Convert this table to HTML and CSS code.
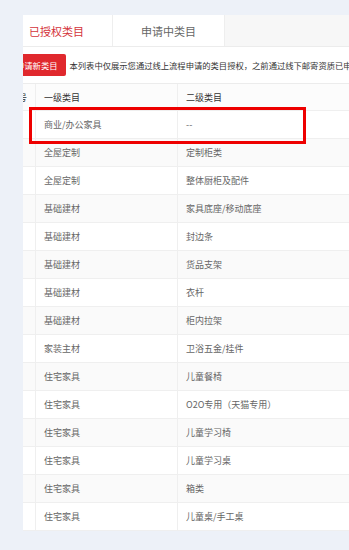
FILE: index.html
```html
<!DOCTYPE html>
<html lang="zh">
<head>
<meta charset="utf-8">
<link rel="stylesheet" href="styles.css">
</head>
<body>
<div class="panel">
  <div class="scroller">
    <div class="tabs">
      <div class="tab active">已授权类目</div>
      <div class="tab">申请中类目</div>
      <div class="tab-fill"></div>
    </div>
    <div class="toolbar">
      <button class="btn">申请新类目</button>
      <span class="desc">本列表中仅展示您通过线上流程申请的类目授权，之前通过线下邮寄资质已申请的类目请联系您的对接人员查询</span>
    </div>
    <table class="grid">
      <thead>
        <tr><th class="c0">序号</th><th class="c1">一级类目</th><th class="c2">二级类目</th></tr>
      </thead>
      <tbody>
        <tr><td class="c0"></td><td>商业/办公家具</td><td>--</td></tr>
        <tr><td class="c0"></td><td>全屋定制</td><td>定制柜类</td></tr>
        <tr><td class="c0"></td><td>全屋定制</td><td>整体厨柜及配件</td></tr>
        <tr><td class="c0"></td><td>基础建材</td><td>家具底座/移动底座</td></tr>
        <tr><td class="c0"></td><td>基础建材</td><td>封边条</td></tr>
        <tr><td class="c0"></td><td>基础建材</td><td>货品支架</td></tr>
        <tr><td class="c0"></td><td>基础建材</td><td>衣杆</td></tr>
        <tr><td class="c0"></td><td>基础建材</td><td>柜内拉架</td></tr>
        <tr><td class="c0"></td><td>家装主材</td><td>卫浴五金/挂件</td></tr>
        <tr><td class="c0"></td><td>住宅家具</td><td>儿童餐椅</td></tr>
        <tr><td class="c0"></td><td>住宅家具</td><td>O2O专用（天猫专用）</td></tr>
        <tr><td class="c0"></td><td>住宅家具</td><td>儿童学习椅</td></tr>
        <tr><td class="c0"></td><td>住宅家具</td><td>儿童学习桌</td></tr>
        <tr><td class="c0"></td><td>住宅家具</td><td>箱类</td></tr>
        <tr><td class="c0"></td><td>住宅家具</td><td>儿童桌/手工桌</td></tr>
      </tbody>
    </table>
  </div>
</div>
<div class="highlight"></div>
</body>
</html>
```

FILE: styles.css
```css
html, body {
  margin: 0;
  padding: 0;
}
body {
  background: #edf1f8;
  font-family: "Noto Sans CJK SC", "Noto Sans", sans-serif;
  width: 349px;
  height: 550px;
  overflow: hidden;
  position: relative;
}
.panel {
  margin: 15px 0 0 23px;
  width: 326px;
  background: #fff;
  overflow: hidden;
}
.scroller {
  margin-left: -22px;
  width: 600px;
}
.tabs {
  display: flex;
  height: 31px;
  border-bottom: 1px solid #ececec;
  background: #f7f7f7;
}
.tab {
  width: 111px;
  background: #fff;
  border-right: 1px solid #eeeeee;
  font-size: 11px;
  color: #666;
  display: flex;
  align-items: center;
  justify-content: center;
}
.tab.active {
  color: #d4333b;
}
.tab-fill {
  flex: 1;
}
.toolbar {
  display: flex;
  align-items: center;
  gap: 4px;
  height: 36px;
  padding-left: 7px;
  border-bottom: 1px solid #ececec;
  white-space: nowrap;
}
.btn {
  height: 22px;
  padding: 0 8px;
  border: 0;
  border-radius: 2px;
  background: #e0282d;
  color: #fff;
  font-family: inherit;
  font-size: 8.3px;
  line-height: 22px;
}
.desc {
  font-size: 8.3px;
  color: #333;
}
.grid {
  border-collapse: collapse;
  width: 600px;
  font-size: 9px;
  color: #666;
}
.grid th, .grid td {
  text-align: left;
  padding: 0 8px;
  border-bottom: 1px solid #efefef;
  font-weight: normal;
  white-space: nowrap;
}
.grid th {
  height: 26px;
  color: #333;
  background: #fcfcfc;
}
.grid td {
  height: 27px;
}
.grid .c0 {
  width: 18px;
  padding: 0 8px 0 8px;
  border-right: 1px solid #efefef;
  text-align: right;
}
.grid th.c1, .grid td:nth-child(2) {
  width: 125px;
  border-right: 1px solid #efefef;
}
.grid tbody tr:nth-child(even) td {
  background: #fafafa;
}
.highlight {
  position: absolute;
  left: 29px;
  top: 107px;
  width: 271px;
  height: 31px;
  border: 3px solid #ee0000;
}
```
